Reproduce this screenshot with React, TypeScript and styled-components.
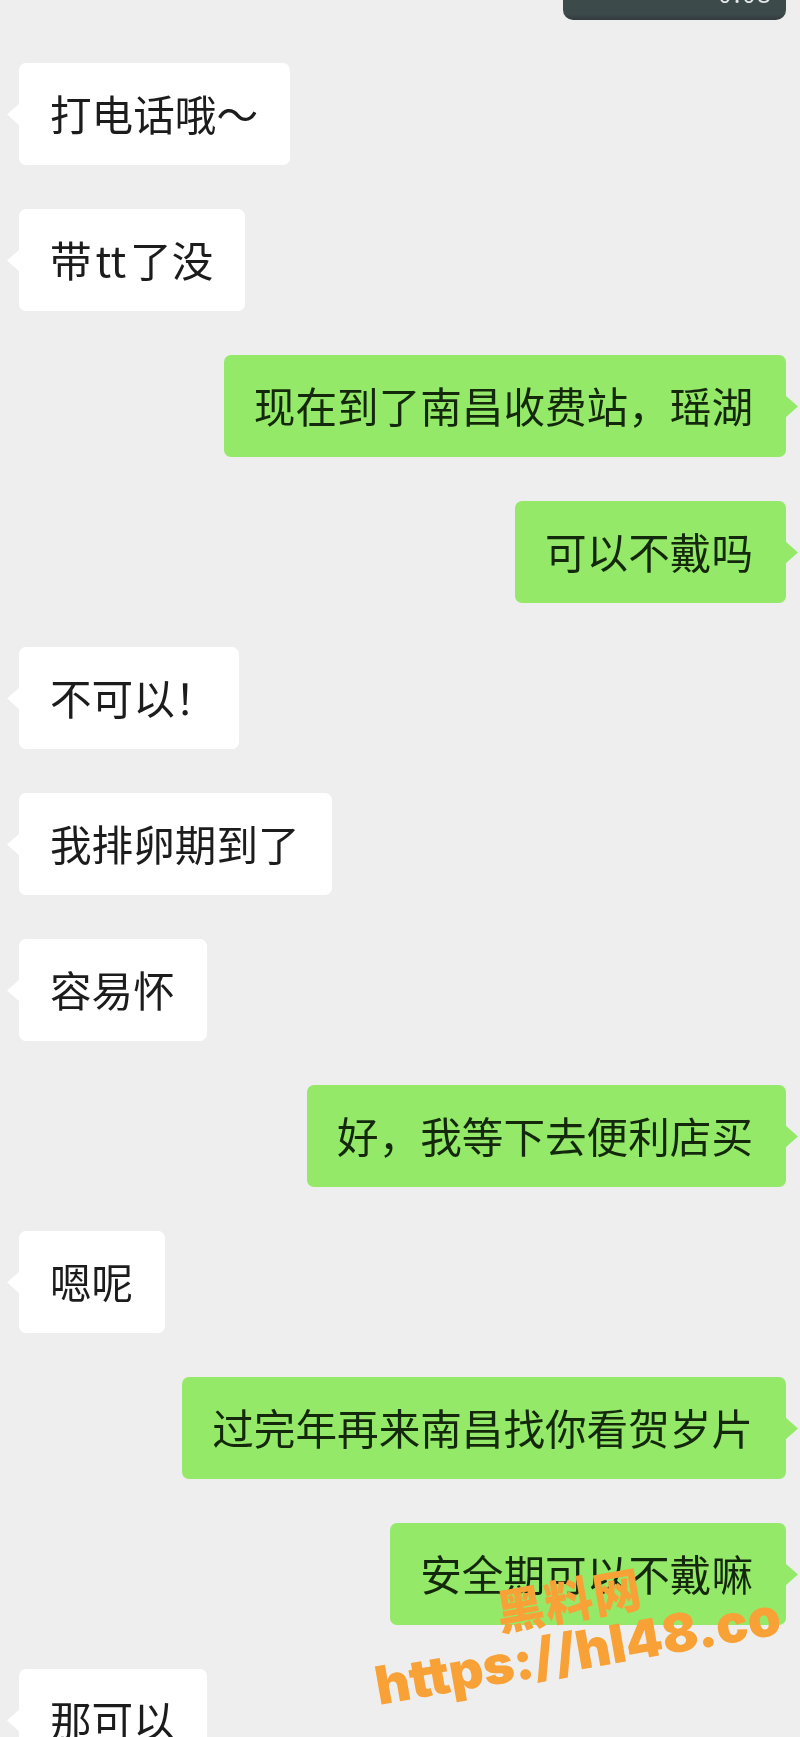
import React from 'react'
import styled, { createGlobalStyle } from 'styled-components'

type Msg = {
  side: 'left' | 'right',
  text: React.ReactNode
}

const GlobalStyle = createGlobalStyle`
  html, body {
    margin: 0;
    padding: 0;
    height: 1737px;
    overflow: hidden;
    background: #eeeeee;
  }
`

const LatinText = styled.span`
  margin: 0 4px;
`

const Bang = styled.span`
  margin-right: -9px;
`

const messages: Msg[] = [
  { side: 'left', text: '打电话哦～' },
  { side: 'left', text: <>带<LatinText>tt</LatinText>了没</> },
  { side: 'right', text: '现在到了南昌收费站，瑶湖' },
  { side: 'right', text: '可以不戴吗' },
  { side: 'left', text: <>不可以<Bang>！</Bang></> },
  { side: 'left', text: '我排卵期到了' },
  { side: 'left', text: '容易怀' },
  { side: 'right', text: '好，我等下去便利店买' },
  { side: 'left', text: '嗯呢' },
  { side: 'right', text: '过完年再来南昌找你看贺岁片' },
  { side: 'right', text: '安全期可以不戴嘛' },
  { side: 'left', text: '那可以' }
]

const Page = styled.div`
  position: relative;
  width: 800px;
  height: 1737px;
  overflow: hidden;
  background: #eeeeee;
  font-family: "Noto Sans CJK SC", "Noto Sans", sans-serif;
  filter: blur(0.5px);
`

const VoiceTop = styled.div`
  align-self: flex-end;
  flex: none;
  width: 223px;
  height: 20px;
  margin-bottom: -1px;
  padding-right: 13px;
  box-sizing: border-box;
  display: flex;
  justify-content: flex-end;
  align-items: flex-start;
  overflow: hidden;
  border-radius: 0 0 10px 10px;
  background: linear-gradient(#3d4a4a 70%, #333a40);
  color: #e4e8e8;
  font-size: 24px;
  line-height: 24px;
  letter-spacing: 2px;
  span {
    transform: translateY(-19px);
  }
`

const Thread = styled.div`
  display: flex;
  flex-direction: column;
  gap: 44px;
  padding: 0 14px 0 19px;
`

const Bubble = styled.div<{ $side: 'left' | 'right' }>`
  position: relative;
  flex: none;
  height: 102px;
  box-sizing: border-box;
  padding: ${p => (p.$side === 'left' ? '0 32px 2px 31px' : '0 33px 2px 30px')};
  display: flex;
  align-items: center;
  white-space: nowrap;
  border-radius: 7px;
  font-size: 41.6px;
  line-height: 100px;
  align-self: ${p => (p.$side === 'left' ? 'flex-start' : 'flex-end')};
  background: ${p => (p.$side === 'left' ? '#ffffff' : '#94ea68')};
  color: ${p => (p.$side === 'left' ? '#1c1c1c' : '#14280c')};
  &::before {
    content: '';
    position: absolute;
    top: 40px;
    width: 13px;
    height: 23px;
    background: inherit;
    ${p => (p.$side === 'left'
      ? 'left: -12px; clip-path: polygon(100% 0, 0 50%, 100% 100%);'
      : 'right: -12px; clip-path: polygon(0 0, 100% 50%, 0 100%);')}
  }
`

const Watermark = styled.div`
  position: absolute;
  left: 380px;
  top: 1606px;
  width: 412px;
  transform: rotate(-10deg);
  transform-origin: left bottom;
  color: #f7a136;
  font-family: Inter, "Noto Sans CJK SC", sans-serif;
  font-weight: 900;
  text-align: center;
`

const WatermarkName = styled.div`
  font-family: "Noto Sans CJK SC", sans-serif;
  font-size: 48px;
  line-height: 52px;
  letter-spacing: 1px;
`

const WatermarkUrl = styled.div`
  font-size: 53px;
  line-height: 57px;
  white-space: nowrap;
`

export default function App() {
  return (
    <>
      <GlobalStyle />
      <Page>
        <Thread>
          <VoiceTop><span>0:03</span></VoiceTop>
          {messages.map((m, i) => (
            <Bubble key={i} $side={m.side}>{m.text}</Bubble>
          ))}
        </Thread>
        <Watermark>
          <WatermarkName>黑料网</WatermarkName>
          <WatermarkUrl>https://hl48.co</WatermarkUrl>
        </Watermark>
      </Page>
    </>
  )
}
